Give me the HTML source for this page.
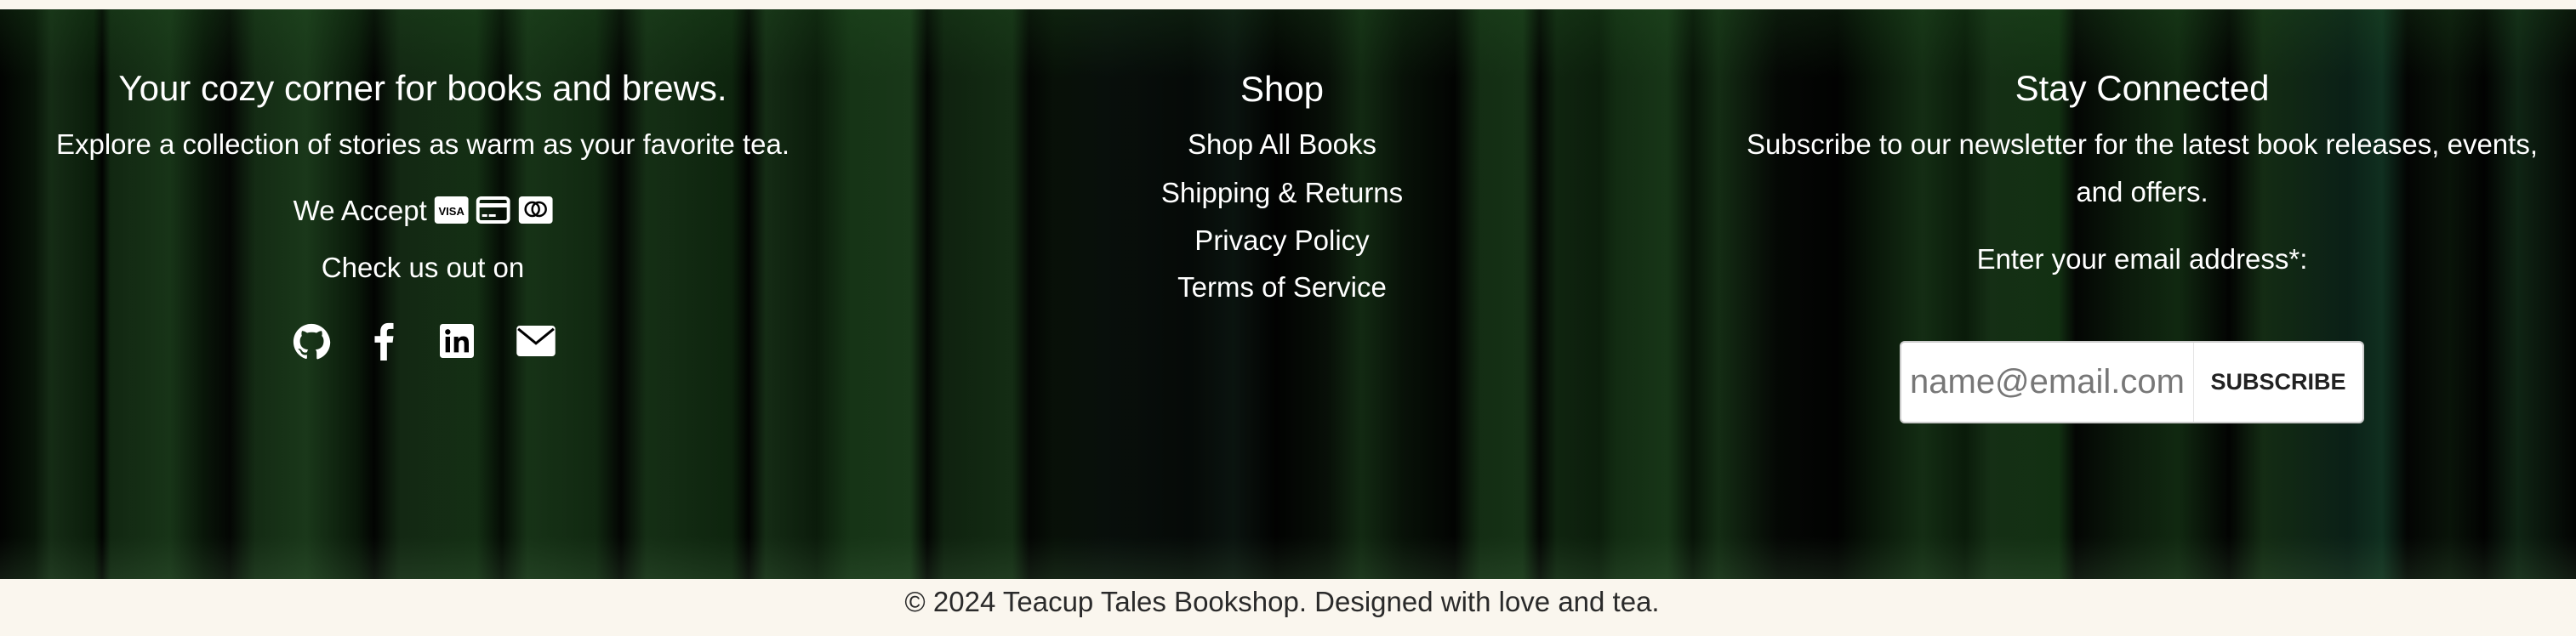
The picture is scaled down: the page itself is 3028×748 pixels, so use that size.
<!DOCTYPE html>
<html><head><meta charset="utf-8"><style>
*{margin:0;padding:0;box-sizing:border-box}
body{width:3028px;height:748px;background:#faf6ee;overflow:hidden;font-family:"Liberation Sans",sans-serif;position:relative}
#bg{position:absolute;left:0;top:11px;width:3028px;height:670px;background:
linear-gradient(180deg,rgba(20,50,20,.4) 0,rgba(0,0,0,.25) 80px,rgba(0,0,0,.25) 620px,rgba(40,60,40,.4) 670px),
linear-gradient(90deg,#020402 0,#0a1a0a 40px,#1c3a1c 60px,#0d250d 110px,#020402 120px,#173417 130px,#1f451f 200px,#0b1d0b 240px,#050805 270px,#1a391a 300px,#224a22 360px,#0c200c 420px,#030503 440px,#193519 470px,#1a3f1a 560px,#061006 590px,#1e431e 620px,#163616 700px,#040704 730px,#1c3e1c 760px,#123012 860px,#020302 880px,#1b3a1b 900px,#0e240e 960px,#1d451d 1000px,#214a21 1070px,#040704 1090px,#142d14 1110px,#1a3b1a 1190px,#050805 1210px,#0a160a 1240px,#0b140f 1300px,#070d0a 1400px,#0e1a14 1450px,#020302 1500px,#0a140a 1560px,#183718 1600px,#0a170a 1650px,#030503 1710px,#1a3c1a 1740px,#1d431d 1790px,#050905 1810px,#143014 1830px,#0f270f 1880px,#183a18 1900px,#1f471f 1960px,#0a1a0a 1990px,#1a3b1a 2020px,#060a06 2090px,#020302 2160px,#0b1c0b 2200px,#1a3c1a 2260px,#0d240d 2310px,#1c3f1c 2340px,#184018 2420px,#050805 2440px,#0f230f 2500px,#163616 2560px,#030503 2620px,#1a3a1a 2660px,#0e2a1e 2760px,#153f2a 2800px,#040604 2830px,#0c1a0c 2880px,#020302 2920px,#14301a 2960px,#030403 3028px)}
.t{position:absolute;color:#fff;text-align:center;white-space:nowrap;transform:translate(-50%,-50%)}
.h{font-size:42px}
.p{font-size:33px}
</style></head><body>
<div id="bg"></div>
<div class="t h" style="left:497px;top:104px">Your cozy corner for books and brews.</div>
<div class="t p" style="left:497px;top:170px">Explore a collection of stories as warm as your favorite tea.</div>
<div class="t p" style="left:497px;top:248px">We Accept
<svg width="40" height="32" viewBox="0 0 40 32" style="vertical-align:-4px"><rect width="40" height="32" rx="4" fill="#fff"/><text x="20" y="22" font-size="13" font-weight="bold" text-anchor="middle" fill="#000" font-family="Liberation Sans">VISA</text></svg>
<svg width="40" height="32" viewBox="0 0 40 32" style="vertical-align:-4px"><rect x="2" y="2" width="36" height="28" rx="4" fill="none" stroke="#fff" stroke-width="4"/><rect x="2" y="8" width="36" height="5" fill="#fff"/><rect x="7" y="21" width="6" height="3" fill="#fff"/><rect x="15" y="21" width="8" height="3" fill="#fff"/></svg>
<svg width="40" height="32" viewBox="0 0 40 32" style="vertical-align:-4px"><rect width="40" height="32" rx="4" fill="#fff"/><circle cx="16" cy="15" r="8" fill="none" stroke="#000" stroke-width="2.5"/><circle cx="24" cy="15" r="8" fill="none" stroke="#000" stroke-width="2.5"/></svg></div>
<div class="t p" style="left:497px;top:315px">Check us out on</div>
<svg style="position:absolute;left:343px;top:380px" width="46" height="44" viewBox="0 0 24 24"><path fill="#fff" d="M12 .5C5.6.5.5 5.6.5 12c0 5.1 3.3 9.4 7.9 10.9.6.1.8-.3.8-.6v-2c-3.2.7-3.900-1.500-3.900-1.500-.5-1.300-1.300-1.700-1.300-1.700-1-.7.1-.7.1-.7 1.2.1 1.8 1.2 1.8 1.2 1 1.8 2.7 1.3 3.4 1 .1-.8.4-1.3.7-1.6-2.6-.3-5.3-1.3-5.3-5.7 0-1.3.5-2.3 1.2-3.1-.1-.3-.5-1.5.1-3.1 0 0 1-.3 3.3 1.2a11.5 11.5 0 0 1 6 0c2.3-1.5 3.3-1.2 3.3-1.2.6 1.6.2 2.8.1 3.1.8.8 1.2 1.9 1.2 3.1 0 4.4-2.7 5.4-5.3 5.7.4.4.8 1.1.8 2.2v3.3c0 .3.2.7.8.6 4.6-1.5 7.9-5.8 7.9-10.9C23.5 5.6 18.4.5 12 .5z"/></svg>
<svg style="position:absolute;left:436px;top:378px" width="30" height="46" viewBox="0 0 12 24"><path fill="#fff" d="M8 24V13h3.5l.5-4H8V6.5C8 5.4 8.3 4.6 9.9 4.6H12V1.1C11.6 1 10.4 1 9 1 6 1 4 2.8 4 6.1V9H.5v4H4v11z"/></svg>
<svg style="position:absolute;left:517px;top:381px" width="40" height="40" viewBox="0 0 24 24"><rect width="24" height="24" rx="2" fill="#fff"/><rect x="4" y="9" width="3.2" height="11" fill="#000"/><circle cx="5.6" cy="5.6" r="1.9" fill="#000"/><path fill="#000" d="M10 9h3v1.6c.5-.9 1.7-1.9 3.5-1.9 3.3 0 3.9 2.2 3.9 5V20h-3.2v-5.5c0-1.3 0-3-1.8-3s-2.1 1.4-2.1 2.9V20H10z"/></svg>
<svg style="position:absolute;left:607px;top:383px" width="46" height="36" viewBox="0 0 24 19"><rect width="24" height="19" rx="2" fill="#fff"/><path d="M1 2l11 9 11-9" fill="none" stroke="#000" stroke-width="1.6"/></svg>
<div class="t h" style="left:1507px;top:105px">Shop</div>
<div class="t p" style="left:1507px;top:170px">Shop All Books</div>
<div class="t p" style="left:1507px;top:227px">Shipping &amp; Returns</div>
<div class="t p" style="left:1507px;top:283px">Privacy Policy</div>
<div class="t p" style="left:1507px;top:338px">Terms of Service</div>
<div class="t h" style="left:2518px;top:104px">Stay Connected</div>
<div class="t p" style="left:2518px;top:170px">Subscribe to our newsletter for the latest book releases, events,</div>
<div class="t p" style="left:2518px;top:226px">and offers.</div>
<div class="t p" style="left:2518px;top:305px">Enter your email address*:</div>
<div style="position:absolute;left:2233px;top:401px;width:546px;height:97px;background:#fff;border:2px solid #ccc;border-radius:6px;display:flex;align-items:center">
<div style="width:344px;padding-left:10px;font-size:40px;color:#777;border-right:1px solid #e4e4e4;height:100%;line-height:93px">name@email.com</div>
<div style="flex:1;text-align:center;font-size:27px;font-weight:bold;color:#222">SUBSCRIBE</div></div>
<div class="t p" style="left:1507px;top:708px;color:#2a2a2a">© 2024 Teacup Tales Bookshop. Designed with love and tea.</div>
</body></html>
